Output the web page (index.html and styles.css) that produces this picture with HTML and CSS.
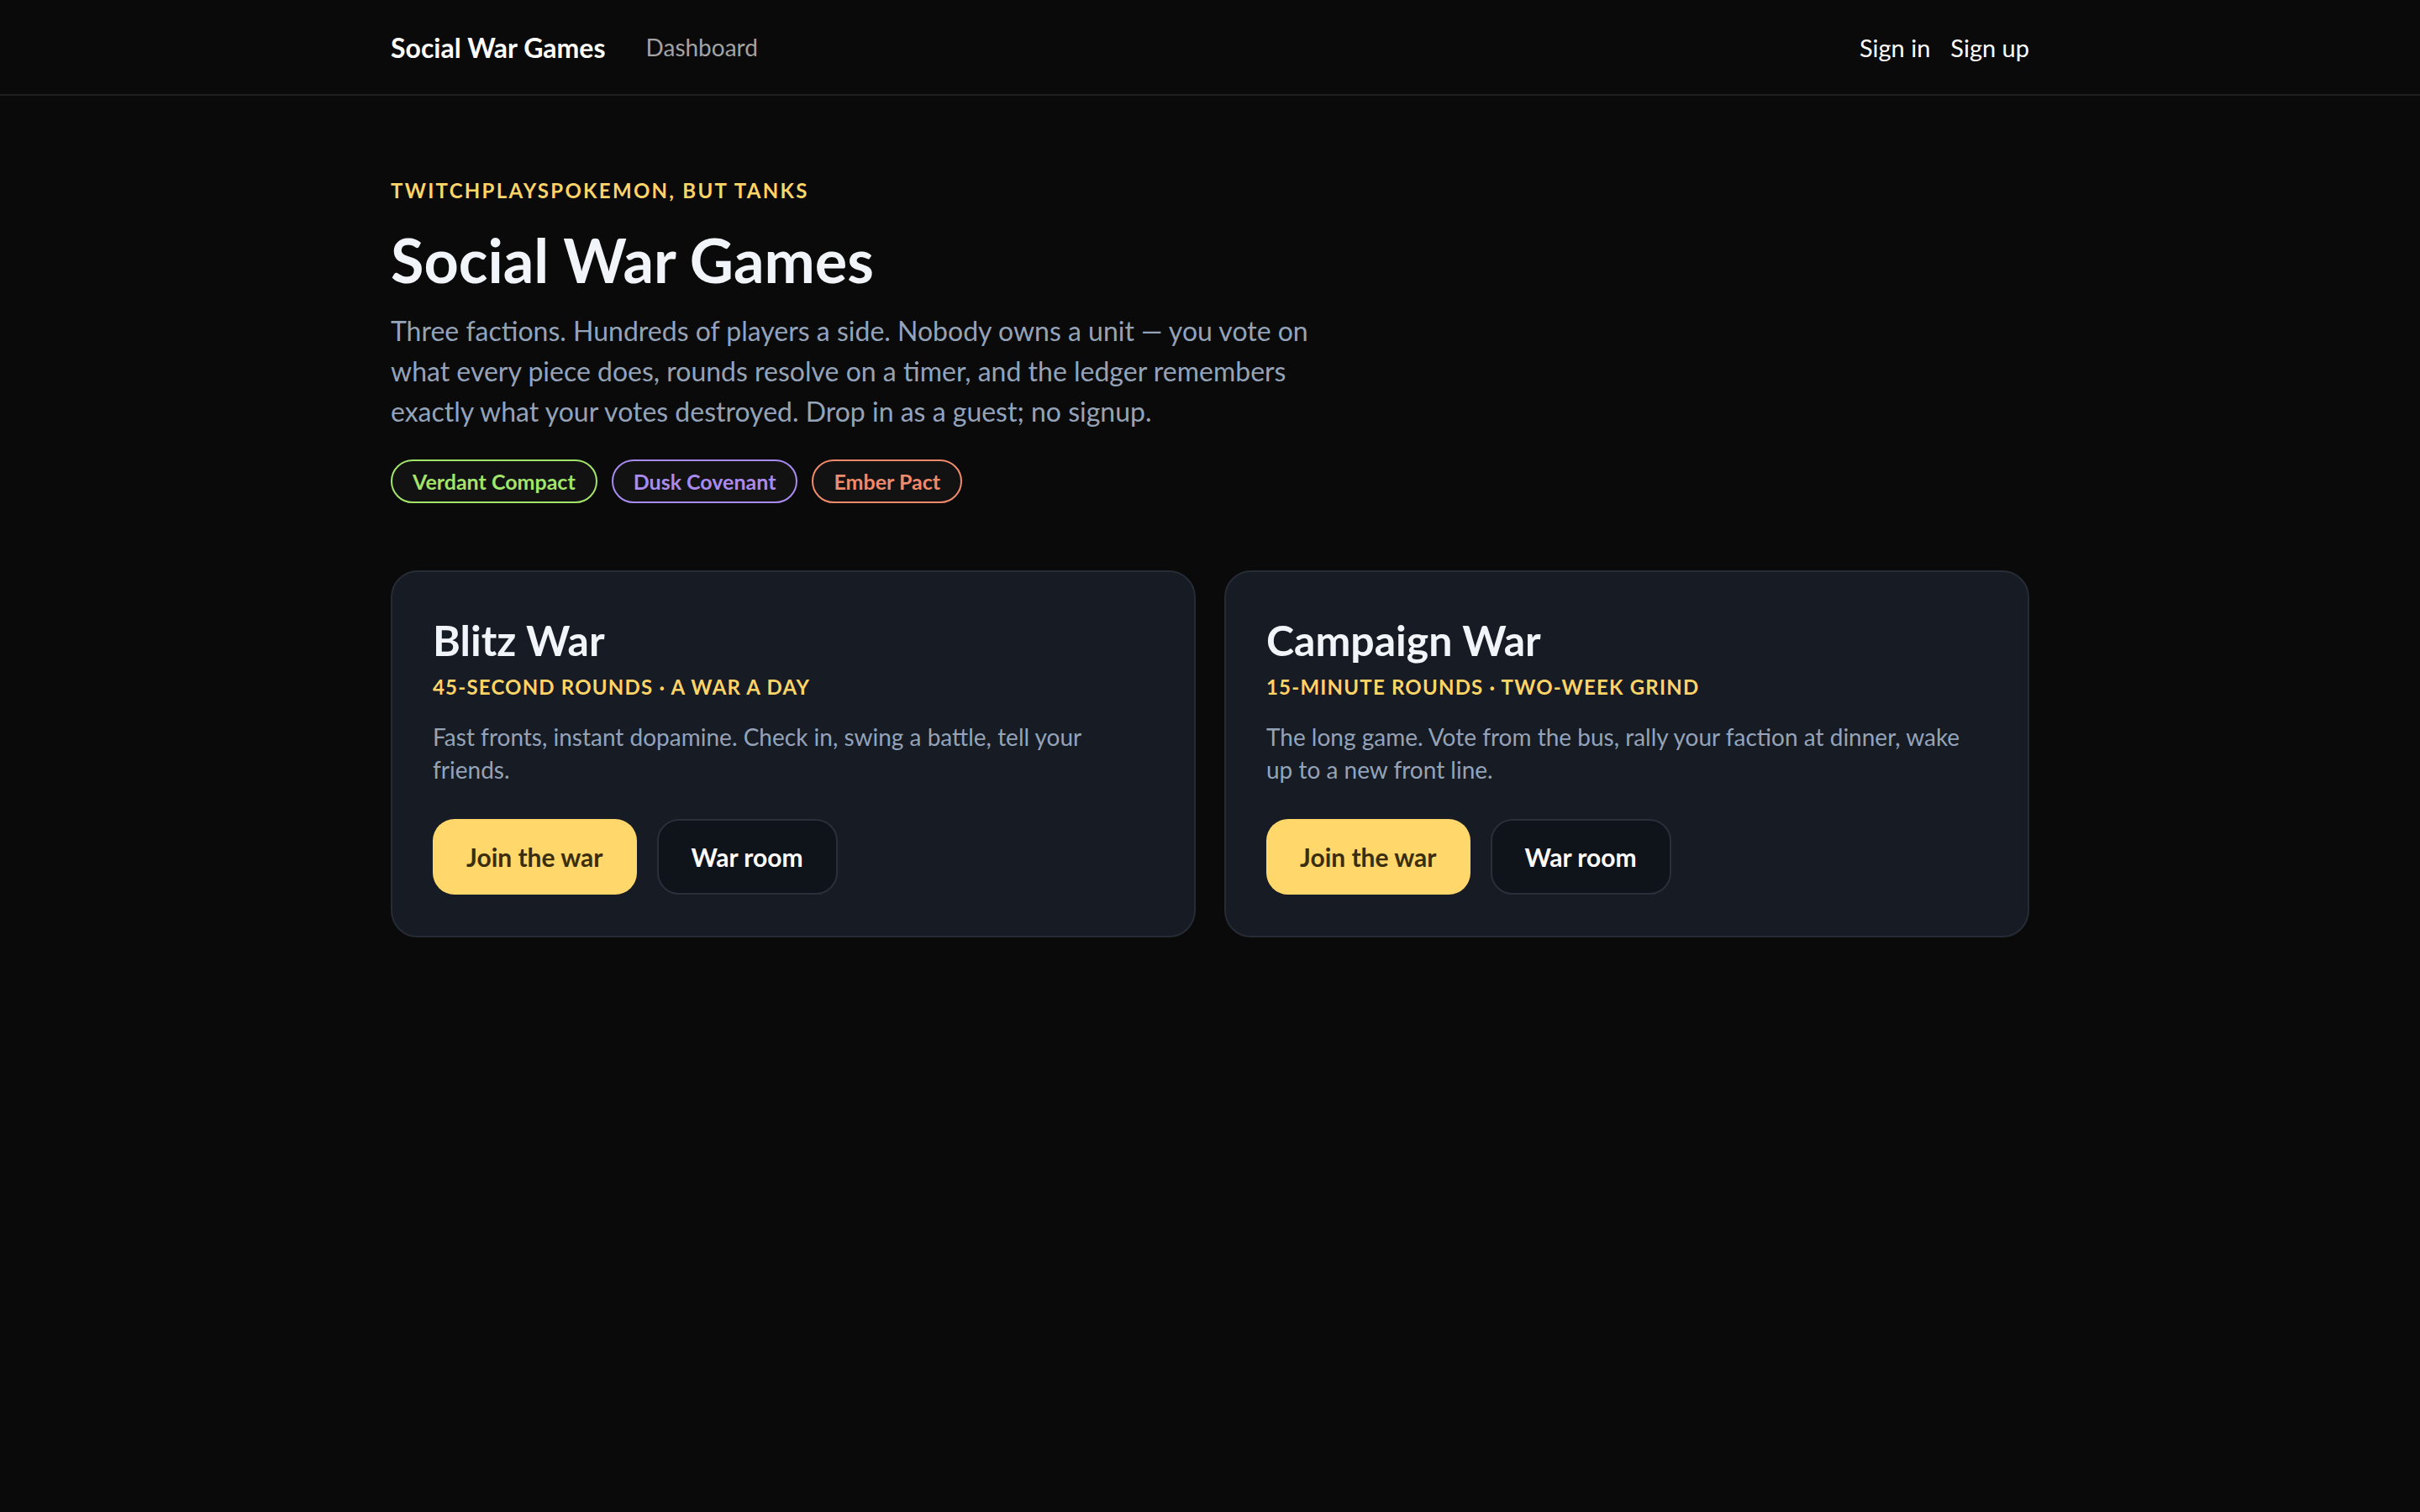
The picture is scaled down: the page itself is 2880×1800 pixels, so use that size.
FILE: index.html
```html
<!DOCTYPE html>
<html lang="en">
<head>
    <meta charset="UTF-8">
    <meta name="viewport" content="width=device-width, initial-scale=1.0">
    <title>Social War Games</title>
    <link rel="stylesheet" href="styles.css">
</head>
<body>
    <!-- top bar -->
    <header class="topbar">
        <div class="container topbar-inner">
            <div class="topbar-left">
                <a class="brand" href="#">Social War Games</a>
                <a class="nav-link" href="#">Dashboard</a>
            </div>
            <div class="topbar-right">
                <a class="auth-link" href="#">Sign in</a>
                <a class="auth-link" href="#">Sign up</a>
            </div>
        </div>
    </header>

    <main class="container">
        <!-- hero -->
        <section class="hero">
            <p class="eyebrow">TwitchPlaysPokemon, but tanks</p>
            <h1 class="hero-title">Social War Games</h1>
            <p class="hero-text">Three factions. Hundreds of players a side. Nobody owns a unit — you vote on what every piece does, rounds resolve on a timer, and the ledger remembers exactly what your votes destroyed. Drop in as a guest; no signup.</p>
            <div class="factions">
                <span class="faction verdant">Verdant Compact</span>
                <span class="faction dusk">Dusk Covenant</span>
                <span class="faction ember">Ember Pact</span>
            </div>
        </section>

        <!-- war modes -->
        <section class="modes">
            <div class="mode-card">
                <h2>Blitz War</h2>
                <div class="mode-meta">45-second rounds · a war a day</div>
                <p class="mode-desc">Fast fronts, instant dopamine. Check in, swing a battle, tell your friends.</p>
                <div class="mode-actions">
                    <a class="btn btn-primary" href="#">Join the war</a>
                    <a class="btn btn-ghost" href="#">War room</a>
                </div>
            </div>
            <div class="mode-card">
                <h2>Campaign War</h2>
                <div class="mode-meta">15-minute rounds · two-week grind</div>
                <p class="mode-desc">The long game. Vote from the bus, rally your faction at dinner, wake up to a new front line.</p>
                <div class="mode-actions">
                    <a class="btn btn-primary" href="#">Join the war</a>
                    <a class="btn btn-ghost" href="#">War room</a>
                </div>
            </div>
        </section>
    </main>
</body>
</html>
```

FILE: styles.css
```css
* {
    margin: 0;
    padding: 0;
    box-sizing: border-box;
}

body {
    font-family: 'Lato', 'Open Sans', sans-serif;
    background: #0a0a0a;
    color: #f1f5f9;
}

a {
    text-decoration: none;
    color: inherit;
}

.container {
    width: 1950px;
    margin: 0 auto;
}

/* top bar */
.topbar {
    border-bottom: 2px solid #1f1f1f;
}

.topbar-inner {
    height: 112px;
    display: flex;
    align-items: center;
    justify-content: space-between;
}

.topbar-left,
.topbar-right {
    display: flex;
    align-items: center;
}

.brand {
    font-size: 32px;
    font-weight: 700;
    color: #ffffff;
}

.nav-link {
    margin-left: 48px;
    font-size: 28px;
    color: #a3a3a3;
}

.topbar-right {
    gap: 24px;
}

.auth-link {
    font-size: 29px;
    color: #ffffff;
}

/* hero */
.hero {
    padding-top: 95px;
}

.eyebrow {
    font-size: 24px;
    line-height: 36px;
    font-weight: 700;
    letter-spacing: 0.095em;
    text-transform: uppercase;
    color: #fcd468;
}

.hero-title {
    margin-top: 25px;
    font-size: 72px;
    line-height: 1.1;
    font-weight: 700;
    color: #f1f5f9;
}

.hero-text {
    margin-top: 21px;
    max-width: 1120px;
    font-size: 32px;
    line-height: 48px;
    color: #94a3b8;
}

.factions {
    margin-top: 33px;
    display: flex;
    gap: 17px;
}

.faction {
    padding: 6px 24px;
    border: 2px solid;
    border-radius: 999px;
    background: #121212;
    font-size: 25px;
    line-height: 36px;
    font-weight: 700;
}

.verdant {
    color: #a3e46a;
    border-color: #a3e46a;
}

.dusk {
    color: #a98bf0;
    border-color: #a98bf0;
}

.ember {
    color: #f08a6c;
    border-color: #f08a6c;
}

/* mode cards */
.modes {
    margin-top: 80px;
    display: grid;
    grid-template-columns: 1fr 1fr;
    gap: 34px;
}

.mode-card {
    background: #161b24;
    border: 2px solid #262c36;
    border-radius: 32px;
    padding: 53px 48px 49px;
}

.mode-card h2 {
    font-size: 50px;
    line-height: 1.15;
    font-weight: 700;
    color: #f1f5f9;
}

.mode-meta {
    margin-top: 9px;
    font-size: 24px;
    line-height: 1.4;
    font-weight: 700;
    letter-spacing: 0.05em;
    text-transform: uppercase;
    color: #fcd468;
}

.mode-desc {
    margin-top: 24px;
    font-size: 28px;
    line-height: 39px;
    color: #94a3b8;
}

.mode-actions {
    margin-top: 39px;
    display: flex;
    gap: 24px;
}

.btn {
    display: inline-block;
    padding: 27px 40px;
    border-radius: 26px;
    font-size: 30px;
    line-height: 36px;
    font-weight: 700;
}

.btn-primary {
    background: #ffd76a;
    color: #3a2e0c;
}

.btn-ghost {
    padding: 25px 39px;
    background: #0f131a;
    border: 2px solid #2a303a;
    color: #ffffff;
}
```
